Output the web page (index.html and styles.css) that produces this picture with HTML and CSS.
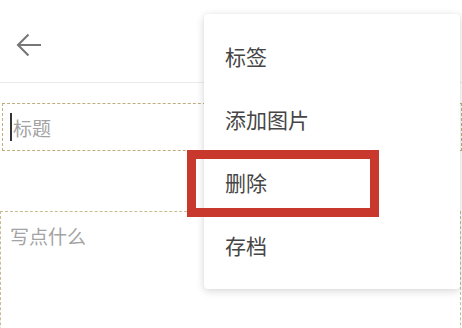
FILE: index.html
```html
<!DOCTYPE html>
<html>
<head>
    <title>编辑笔记</title>
    <link rel="stylesheet" href="styles.css">
</head>
<body>
    <div class="page">
        <div class="top-bar">
            <button class="back-button">
                <svg width="28" height="28" viewBox="0 0 28 28">
                    <path d="M26 14H3M13.5 3.5L3 14L13.5 24.5" fill="none" stroke="#777" stroke-width="2.1"/>
                </svg>
            </button>
        </div>
        <div class="editor">
            <div class="title-field">
                <span class="caret"></span>
                <span class="placeholder">标题</span>
            </div>
            <div class="body-field">
                <span class="placeholder">写点什么</span>
            </div>
        </div>

        <div class="menu">
            <div class="menu-item">标签</div>
            <div class="menu-item">添加图片</div>
            <div class="menu-item">删除</div>
            <div class="menu-item">存档</div>
        </div>
        <div class="highlight"></div>
    </div>
</body>
</html>
```

FILE: styles.css
```css
body {
    margin: 0;
    font-family: "Noto Sans CJK SC", "Noto Sans", sans-serif;
    background: #fff;
}

.page {
    position: relative;
    width: 462px;
    height: 328px;
    overflow: hidden;
}

.top-bar {
    height: 83px;
    display: flex;
    align-items: center;
    padding-left: 15px;
    border-bottom: 1px solid #ececec;
    box-sizing: border-box;
}

.back-button {
    background: none;
    border: none;
    padding: 0;
    margin-top: 8px;
    display: flex;
}

.editor {
    display: flex;
    flex-direction: column;
    padding-top: 20px;
}

.title-field {
    height: 48px;
    margin-left: 2px;
    border: 1px dashed #bfae7c;
    box-sizing: border-box;
    display: flex;
    align-items: center;
    padding-left: 7px;
}

.caret {
    width: 2px;
    height: 28px;
    background: #333;
    margin-right: 1px;
}

.placeholder {
    color: #a3a3a3;
    font-size: 19px;
}

.body-field {
    height: 160px;
    margin-top: 60px;
    margin-right: 1px;
    border: 1px dashed #c9bc94;
    box-sizing: border-box;
    padding: 10px 0 0 9px;
}

.menu {
    position: absolute;
    left: 204px;
    top: 14px;
    width: 256px;
    height: 275px;
    background: #fff;
    border-radius: 4px;
    box-shadow: 0 2px 8px rgba(0, 0, 0, 0.16), 0 0 2px rgba(0, 0, 0, 0.06);
    padding-top: 10px;
    box-sizing: border-box;
}

.menu-item {
    height: 63px;
    display: flex;
    align-items: center;
    padding-left: 21px;
    font-size: 21px;
    color: #454545;
}

.highlight {
    position: absolute;
    left: 187px;
    top: 150px;
    width: 192px;
    height: 67px;
    border: 9px solid #c9382d;
    box-sizing: border-box;
}
```
